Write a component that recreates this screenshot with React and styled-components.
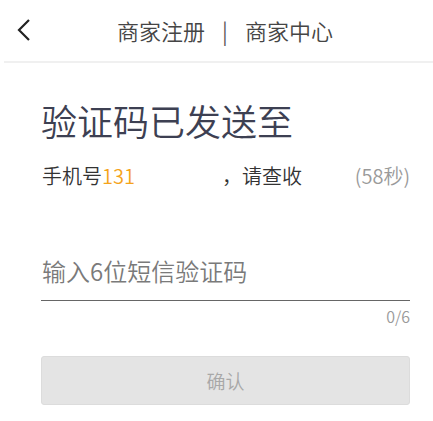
import React from "react";
import styled, { createGlobalStyle } from "styled-components";

const Global = createGlobalStyle`
  html, body { margin: 0; padding: 0; background: #fff; }
  body { font-family: "Noto Sans CJK SC", "Noto Sans", sans-serif; font-weight: 350; }
  * { box-sizing: border-box; }
`;

const Page = styled.div`
  width: 433px;
  height: 421px;
  background: #fff;
  overflow: hidden;
`;

const Header = styled.header`
  display: flex;
  align-items: center;
  height: 63px;
  margin-left: 4px;
  padding-left: 13px;
  border-bottom: 2px solid #f0f0f0;
`;

const BackButton = styled.button`
  display: flex;
  align-items: center;
  justify-content: flex-start;
  width: 40px;
  height: 30px;
  padding: 0;
  margin-top: -2px;
  border: 0;
  background: none;
`;

const Title = styled.div`
  flex: 1;
  display: flex;
  justify-content: center;
  align-items: center;
  padding-right: 40px;
  font-size: 22px;
  line-height: 24px;
  color: #454545;
  margin-top: -2px;
`;

const Divider = styled.span`
  width: 40px;
  text-align: center;
  color: #555;
  font-size: 22px;
`;

const Content = styled.main`
  padding: 0 23px 0 41px;
`;

const Heading = styled.h1`
  margin: 39px 0 0;
  font-size: 36px;
  line-height: 36px;
  font-weight: 350;
  color: #3d4052;
`;

const PhoneRow = styled.div`
  display: flex;
  align-items: center;
  margin-top: 28px;
  font-size: 20px;
  line-height: 20px;
  color: #333;
`;

const PhoneLabel = styled.span`
  min-width: 181px;
  padding-left: 1px;
`;

const Orange = styled.span`
  color: #f5a31a;
`;

const Countdown = styled.span`
  margin-left: auto;
  color: #9a9a9a;
`;

const Field = styled.div`
  margin-top: 66px;
  border-bottom: 1.5px solid #666;
`;

const CodeInput = styled.input`
  display: block;
  width: 100%;
  height: 48px;
  padding: 0 0 12px 1px;
  border: 0;
  outline: none;
  background: transparent;
  font-family: inherit;
  font-weight: 350;
  font-size: 24px;
  color: #333;
  &::placeholder { color: #7a7a7a; }
`;

const Counter = styled.div`
  text-align: right;
  margin-top: 6px;
  font-size: 16px;
  line-height: 18px;
  color: #9a9a9a;
`;

const ConfirmButton = styled.button`
  display: block;
  width: 100%;
  height: 49px;
  margin-top: 31px;
  border: 1px solid #dcdcdc;
  border-radius: 3px;
  background: #e4e4e4;
  font-family: inherit;
  font-weight: 350;
  font-size: 19px;
  color: #a8a8a8;
`;

export default function App() {
  return (
    <Page>
      <Global />
      <Header>
        <BackButton aria-label="back">
          <svg width="14" height="22" viewBox="0 0 14 22">
            <path d="M12 1 L2 11 L12 21" fill="none" stroke="#222" strokeWidth="2.2" />
          </svg>
        </BackButton>
        <Title>
          <span>商家注册</span>
          <Divider>|</Divider>
          <span>商家中心</span>
        </Title>
      </Header>
      <Content>
        <Heading>验证码已发送至</Heading>
        <PhoneRow>
          <PhoneLabel>
            手机号<Orange>131</Orange>
          </PhoneLabel>
          <span>，请查收</span>
          <Countdown>(58秒)</Countdown>
        </PhoneRow>
        <Field>
          <CodeInput placeholder="输入6位短信验证码" />
        </Field>
        <Counter>0/6</Counter>
        <ConfirmButton>确认</ConfirmButton>
      </Content>
    </Page>
  );
}
